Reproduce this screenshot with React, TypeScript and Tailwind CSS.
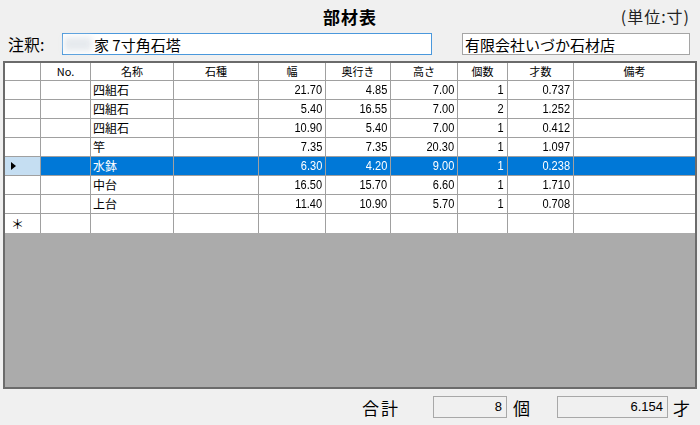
import React from "react";

type Row = {
  name: string;
  w: string;
  d: string;
  h: string;
  n: string;
  s: string;
};

const rows: Row[] = [
  { name: "四組石", w: "21.70", d: "4.85", h: "7.00", n: "1", s: "0.737" },
  { name: "四組石", w: "5.40", d: "16.55", h: "7.00", n: "2", s: "1.252" },
  { name: "四組石", w: "10.90", d: "5.40", h: "7.00", n: "1", s: "0.412" },
  { name: "竿", w: "7.35", d: "7.35", h: "20.30", n: "1", s: "1.097" },
  { name: "水鉢", w: "6.30", d: "4.20", h: "9.00", n: "1", s: "0.238" },
  { name: "中台", w: "16.50", d: "15.70", h: "6.60", n: "1", s: "1.710" },
  { name: "上台", w: "11.40", d: "10.90", h: "5.70", n: "1", s: "0.708" },
];

const num = "font-['Liberation_Sans_Narrow','Liberation_Sans',sans-serif] text-[12px]";

function Cell({
  w,
  children,
  right,
  last,
  className = "",
}: {
  w?: string;
  children?: React.ReactNode;
  right?: boolean;
  last?: boolean;
  className?: string;
}) {
  return (
    <div
      className={`${w ?? "flex-1"} h-full flex items-center ${
        right ? "justify-end pr-[3px]" : "pl-[2px]"
      } ${last ? "" : "border-r border-[#a0a0a0]"} overflow-hidden whitespace-nowrap ${className}`}
    >
      {children}
    </div>
  );
}

function HeaderCell({ w, children, last }: { w?: string; children?: React.ReactNode; last?: boolean }) {
  return (
    <div
      className={`${w ?? "flex-1"} h-full flex items-center justify-center ${
        last ? "" : "border-r border-[#a0a0a0]"
      } text-[11px]`}
    >
      {children}
    </div>
  );
}

function Num({ children }: { children: React.ReactNode }) {
  return <span className="inline-block scale-x-[0.92] origin-right">{children}</span>;
}

export default function App() {
  return (
    <div className="w-[700px] h-[425px] bg-[#f0f0f0] flex flex-col font-['Noto_Sans_CJK_JP',sans-serif] text-black overflow-hidden">
      {/* title */}
      <div className="h-[32px] grid grid-cols-[1fr_auto_1fr] items-center">
        <div />
        <div className="text-[17px] font-bold tracking-[1px] pt-[1px]">部材表</div>
        <div className="justify-self-end pr-[10px] text-[16px] text-[#222] tracking-[1px]">(単位:寸)</div>
      </div>

      {/* fields */}
      <div className="h-[22px] mt-[1px] flex items-center">
        <div className="w-[62px] pl-[8px] text-[16px] leading-none">注釈:</div>
        <div className="w-[370px] h-[22px] bg-white border border-[#4a98dc] flex items-center">
          <div className="w-[28px] h-[14px] ml-[1px] bg-[#e6eaee] blur-[3px]" />
          <span className="text-[15px] leading-none ml-[2px]">家 7寸角石塔</span>
        </div>
        <div className="w-[30px]" />
        <div className="w-[228px] h-[22px] bg-white border border-[#a5a5a5] flex items-center pl-[2px]">
          <span className="text-[15px] leading-none">有限会社いづか石材店</span>
        </div>
      </div>

      {/* grid */}
      <div className="mx-[3px] mt-[6px] h-[328px] border-2 border-[#6b6b6b] bg-[#ababab] flex flex-col">
        <div className="h-[18px] bg-white border-b border-[#a0a0a0] flex">
          <HeaderCell w="w-[36px]" />
          <HeaderCell w="w-[50px]">No.</HeaderCell>
          <HeaderCell w="w-[83px]">名称</HeaderCell>
          <HeaderCell w="w-[85px]">石種</HeaderCell>
          <HeaderCell w="w-[67px]">幅</HeaderCell>
          <HeaderCell w="w-[65px]">奥行き</HeaderCell>
          <HeaderCell w="w-[67px]">高さ</HeaderCell>
          <HeaderCell w="w-[50px]">個数</HeaderCell>
          <HeaderCell w="w-[66px]">才数</HeaderCell>
          <HeaderCell last>備考</HeaderCell>
        </div>
        {rows.map((r, i) => {
          const sel = i === 4;
          return (
            <div
              key={i}
              className={`h-[19px] border-b border-[#a0a0a0] flex ${sel ? "text-white" : "bg-white"}`}
            >
              <Cell w="w-[36px]" className={sel ? "bg-[#c5def2]" : "bg-white"}>
                {sel && (
                  <svg width="6" height="8" viewBox="0 0 6 8" className="ml-[4px]">
                    <path d="M0 0 L5 4 L0 8 Z" fill="#000" />
                  </svg>
                )}
              </Cell>
              <div className={`flex-1 h-full flex ${sel ? "bg-[#0078d7]" : ""}`}>
                <Cell w="w-[50px]" />
                <Cell w="w-[83px]" className="text-[12px]">
                  {r.name}
                </Cell>
                <Cell w="w-[85px]" />
                <Cell w="w-[67px]" right className={num}>
                  <Num>{r.w}</Num>
                </Cell>
                <Cell w="w-[65px]" right className={num}>
                  <Num>{r.d}</Num>
                </Cell>
                <Cell w="w-[67px]" right className={num}>
                  <Num>{r.h}</Num>
                </Cell>
                <Cell w="w-[50px]" right className={num}>
                  <Num>{r.n}</Num>
                </Cell>
                <Cell w="w-[66px]" right className={num}>
                  <Num>{r.s}</Num>
                </Cell>
                <Cell last />
              </div>
            </div>
          );
        })}
        <div className="h-[19px] bg-white flex">
          <Cell w="w-[36px]" className="pl-[6px] text-[13px] leading-none">
            ＊
          </Cell>
          <Cell w="w-[50px]" />
          <Cell w="w-[83px]" />
          <Cell w="w-[85px]" />
          <Cell w="w-[67px]" />
          <Cell w="w-[65px]" />
          <Cell w="w-[67px]" />
          <Cell w="w-[50px]" />
          <Cell w="w-[66px]" />
          <Cell last />
        </div>
      </div>

      {/* totals */}
      <div className="flex-1 flex items-center pl-[362px]">
        <div className="w-[71px] text-[17px] leading-none tracking-[2px]">合計</div>
        <div className="w-[74px] h-[22px] border border-[#a8a8a8] bg-[#f0f0f0] flex items-center justify-end pr-[4px]">
          <span className={`${num} text-[13px]`}>8</span>
        </div>
        <div className="w-[50px] pl-[6px] text-[17px] leading-none">個</div>
        <div className="w-[111px] h-[22px] border border-[#a8a8a8] bg-[#f0f0f0] flex items-center justify-end pr-[4px]">
          <span className={`${num} text-[13px]`}>6.154</span>
        </div>
        <div className="pl-[5px] text-[17px] leading-none">才</div>
      </div>
    </div>
  );
}
